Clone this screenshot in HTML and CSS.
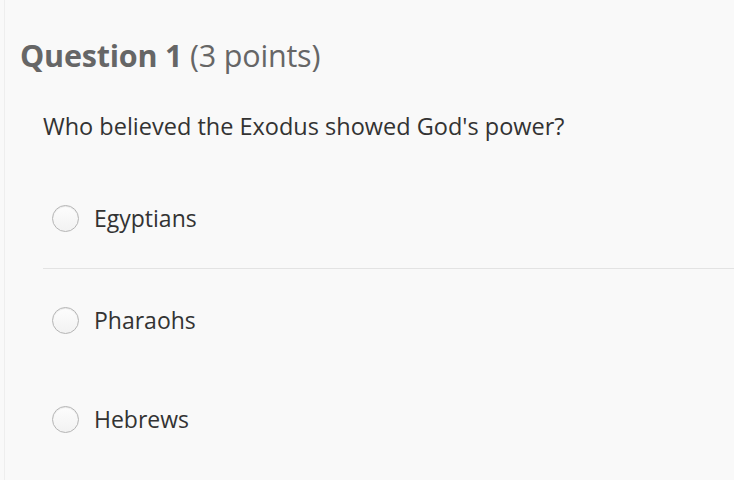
FILE: index.html
```html
<!DOCTYPE html>
<html>
<head>
<meta charset="utf-8">
<link rel="stylesheet" href="styles.css">
</head>
<body>
<div class="page">
  <h1 class="qtitle"><strong>Question 1</strong> (3 points)</h1>
  <div class="qbody">
    <p class="qtext">Who believed the Exodus showed God's power?</p>
    <div class="options">
      <label class="option sep"><span class="radio"></span><span class="label">Egyptians</span></label>
      <label class="option"><span class="radio"></span><span class="label">Pharaohs</span></label>
      <label class="option"><span class="radio"></span><span class="label">Hebrews</span></label>
    </div>
  </div>
</div>
</body>
</html>
```
FILE: styles.css
```css
html, body {
  margin: 0;
  padding: 0;
  height: 100%;
  background: #f9f9f9;
}
body {
  font-family: "Open Sans", Lato, sans-serif;
  color: #333;
}
.page {
  min-height: 100%;
  border-left: 1px solid #eeeeee;
  margin-left: 4px;
  padding: 35px 0 0 15px;
  box-sizing: border-box;
}
.qtitle {
  margin: 0;
  font-size: 30.5px;
  font-weight: normal;
  color: #666;
  line-height: 40px;
  letter-spacing: -0.2px;
}
.qtitle strong {
  font-weight: bold;
}
.qbody {
  padding-left: 23px;
}
.qtext {
  margin: 0;
  padding-top: 36px;
  font-size: 23.5px;
  line-height: 30px;
  color: #333;
}
.options {
  padding-top: 62px;
}
.option {
  display: flex;
  align-items: center;
  gap: 15px;
  padding-left: 9px;
  box-sizing: border-box;
}
.option.sep {
  padding-bottom: 35px;
  border-bottom: 1px solid #e3e3e3;
}
.option.sep + .option {
  padding-top: 36px;
}
.options .option:last-child {
  padding-top: 69px;
}
.radio {
  width: 25px;
  height: 25px;
  border-radius: 50%;
  border: 1px solid #b5b5b5;
  background: linear-gradient(#fdfdfd, #f2f2f2);
  box-shadow: inset 0 1px 1px rgba(0,0,0,0.08);
  flex: none;
}
.label {
  font-size: 23px;
  line-height: 30px;
  color: #333;
}
```
